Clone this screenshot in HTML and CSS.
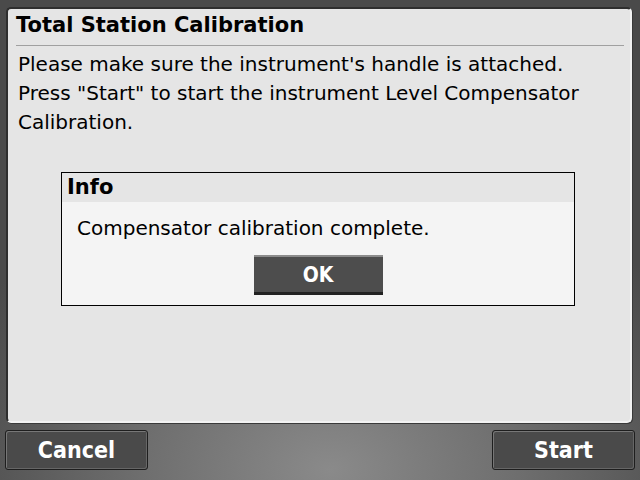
FILE: index.html
```html
<!DOCTYPE html>
<html lang="en">
<head>
  <meta charset="UTF-8">
  <meta name="viewport" content="width=device-width, initial-scale=1.0">
  <title>Total Station Calibration</title>
  <link rel="stylesheet" href="styles.css">
</head>
<body>
  <div class="screen">
    <div class="panel">
      <h1 class="panel-title">Total Station Calibration</h1>
      <p class="message">Please make sure the instrument's handle is attached.<br>Press "Start" to start the instrument Level Compensator Calibration.</p>

      <div class="dialog">
        <div class="dialog-head">Info</div>
        <div class="dialog-body">
          <p class="dialog-text">Compensator calibration complete.</p>
          <button class="ok-button">OK</button>
        </div>
      </div>
    </div>

    <div class="footer">
      <button class="soft-key">Cancel</button>
      <button class="soft-key">Start</button>
    </div>
  </div>
</body>
</html>
```

FILE: styles.css
```css
html, body {
  margin: 0;
  padding: 0;
}
body {
  width: 640px;
  height: 480px;
  overflow: hidden;
  font-family: "DejaVu Sans", sans-serif;
  background: radial-gradient(ellipse 420px 300px at 330px 470px, #8a8a8a 0%, #6e6e6e 45%, #555 80%, #4a4a4a 100%);
}
.screen {
  display: flex;
  flex-direction: column;
  height: 480px;
  padding: 7px 8px 0 6px;
  box-sizing: border-box;
}
.panel {
  height: 416px;
  box-sizing: border-box;
  background-color: #e5e5e5;
  border-radius: 5px;
  border-top: 2px solid #2e2e2e;
  border-left: 2px solid #2e2e2e;
  border-right: 2px solid #f2f2f2;
  border-bottom: 2px solid #f2f2f2;
  box-shadow: 1px 1px 0 #3a3a3a;
  padding: 1px 6px 0 8px;
}
.panel-title {
  margin: 0;
  font-size: 21px;
  font-weight: bold;
  line-height: 30px;
  padding-bottom: 5px;
  border-bottom: 1px solid #a0a0a0;
  color: #000;
}
.message {
  margin: 4px 0 0 2px;
  font-size: 20px;
  line-height: 29px;
  color: #000;
}
.dialog {
  width: 512px;
  margin: 35px 0 0 45px;
  border: 1px solid #000;
  background-color: #f4f4f4;
}
.dialog-head {
  background-color: #e5e5e5;
  font-size: 21px;
  font-weight: bold;
  line-height: 29px;
  padding-left: 5px;
}
.dialog-body {
  display: flex;
  flex-direction: column;
  align-items: center;
  padding-bottom: 10px;
}
.dialog-text {
  align-self: flex-start;
  margin: 12px 0 0 15px;
  font-size: 20px;
  line-height: 28px;
}
.ok-button {
  width: 129px;
  height: 40px;
  margin-top: 13px;
  background-color: #4d4d4d;
  color: #fff;
  font-family: "DejaVu Sans Condensed", "DejaVu Sans", sans-serif;
  font-size: 21px;
  font-weight: bold;
  border: none;
  border-top: 2px solid #8c8c8c;
  border-bottom: 3px solid #222;
  padding: 0;
}
.footer {
  display: flex;
  justify-content: space-between;
  margin: 7px -3px 0 -1px;
}
.soft-key {
  width: 143px;
  height: 40px;
  background-color: #4a4a4a;
  color: #fff;
  font-family: "DejaVu Sans Condensed", "DejaVu Sans", sans-serif;
  font-size: 23px;
  font-weight: bold;
  border: 1px solid #1e1e1e;
  border-radius: 3px;
  box-shadow: inset 1px 1px 0 #777, inset -1px -1px 0 #666;
  padding: 0;
}
```
